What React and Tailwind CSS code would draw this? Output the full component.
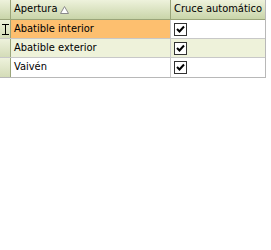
const rows = [
  { name: 'Abatible interior', bg: 'bg-[#fdbf6f]', alt: false, current: true },
  { name: 'Abatible exterior', bg: 'bg-[#eef2da]', alt: true },
  { name: 'Vaivén', bg: 'bg-white' },
];

function CheckBox() {
  return (
    <div className="w-[13px] h-[13px] border border-[#333] bg-white flex items-center justify-center">
      <svg width="9" height="9" viewBox="0 0 9 9">
        <path d="M1 4 L3.5 6.5 L8 1.5" stroke="#000" strokeWidth="2" fill="none" />
      </svg>
    </div>
  );
}

function Cursor() {
  return (
    <svg width="7" height="11" viewBox="0 0 7 11">
      <path d="M0 0.5 H7 M0 10.5 H7 M3.5 0 V11" stroke="#000" strokeWidth="1" fill="none" />
    </svg>
  );
}

export default function App() {
  return (
    <div className="w-[271px] h-[250px] bg-white font-['DejaVu_Sans_Condensed','Liberation_Sans',sans-serif] text-[11px] text-black">
      <div className="w-[266px] border-r border-b border-[#b8b8b8]">
        {/* header */}
        <div className="flex h-[20px] bg-gradient-to-b from-[#eef2dc] to-[#c9d5a9] border-b border-[#9aa57a]">
          <div className="w-[11px] border-r border-[#9aa57a]" />
          <div className="w-[160px] flex items-center px-[3px] border-r border-[#9aa57a] whitespace-nowrap">
            <span>Apertura</span>
            <svg className="ml-[2px]" width="9" height="8" viewBox="0 0 9 8">
              <path d="M4.5 0.5 L8.5 7.5 H0.5 Z" fill="#fff" stroke="#8a8a8a" strokeWidth="1" />
            </svg>
          </div>
          <div className="flex-1 flex items-center px-[3px] whitespace-nowrap overflow-hidden">Cruce automático</div>
        </div>
        {rows.map((r) => (
          <div key={r.name} className="flex h-[19px] border-b border-[#c8c8c8] last:border-b-0">
            <div className="w-[11px] flex items-center justify-center bg-gradient-to-b from-[#eef2dc] to-[#d4dcb8] border-r border-[#9aa57a]">
              {r.current && <Cursor />}
            </div>
            <div className={`w-[160px] flex items-center px-[3px] border-r border-[#c8c8c8] whitespace-nowrap ${r.bg}`}>{r.name}</div>
            <div className={`flex-1 flex items-center px-[3px] ${r.alt ? 'bg-[#eef2da]' : 'bg-white'}`}>
              <CheckBox />
            </div>
          </div>
        ))}
      </div>
    </div>
  );
}
